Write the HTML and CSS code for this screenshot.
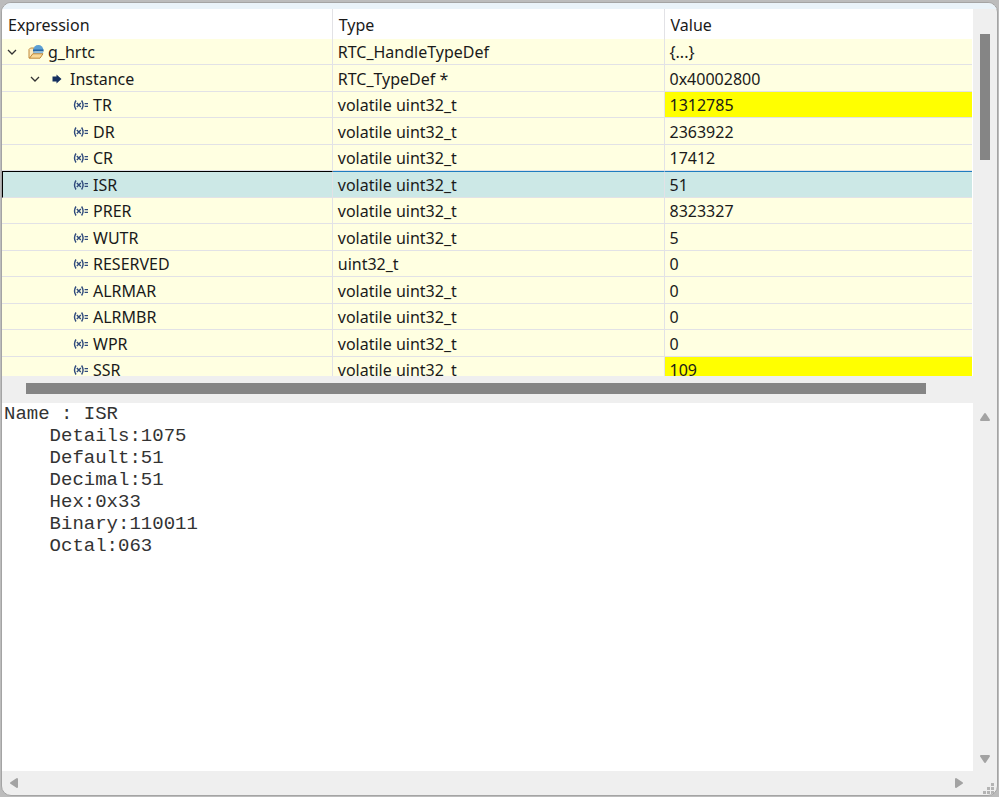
FILE: index.html
```html
<!DOCTYPE html>
<html lang="en">
  <head>
    <meta charset="UTF-8" />
    <meta name="viewport" content="width=device-width, initial-scale=1.0" />
    <title>Expressions</title>
    <link rel="stylesheet" href="styles.css">
  </head>
  <body>
    <!-- Shared icons -->
    <svg class="sprite" aria-hidden="true">
      <symbol id="icon-chevron" viewBox="0 0 10 10">
        <path d="M1 3 L5 7 L9 3" fill="none" stroke="#333" stroke-width="1.3" />
      </symbol>
      <symbol id="icon-variable" viewBox="0 0 16 12">
        <g fill="none" stroke="#2f4a7c" stroke-width="1.4">
          <path d="M3 1.5 Q0 6 3 10.5" />
          <path d="M8.6 1.5 Q11.6 6 8.6 10.5" />
          <path d="M3.8 4 L7.8 8 M7.8 4 L3.8 8" />
          <path d="M11.6 4.6 H15 M11.6 7.4 H15" />
        </g>
      </symbol>
      <symbol id="icon-pointer" viewBox="0 0 10 10">
        <path d="M0.5 2.5 H4.5 V0.5 L9.5 5 L4.5 9.5 V7.5 H0.5 Z" fill="#15305f" />
      </symbol>
      <symbol id="icon-struct" viewBox="0 0 16 16">
        <path d="M1 5.5 L2.5 4 H6 V9 L2 14 H1 Z" fill="#fbe9bd" stroke="#c08a3c" />
        <path d="M5.2 6 A5 5 0 0 1 15.4 6 Z" fill="#5b9fd4" />
        <path d="M5 5.5 H15.6 V7.5 H5 Z" fill="#2564a3" />
        <path d="M5.2 7.5 H15.4 L14.6 10 H5.6 Z" fill="#8fbfe4" />
        <path d="M1.5 14.2 L4.8 9.8 H15 L12 14.2 Z" fill="#f9d998" stroke="#c08a3c" />
      </symbol>
    </svg>

    <main class="window">
      <div class="titlebar"></div>

      <section class="expressions">
        <div class="table-wrap">
          <table>
            <thead>
              <tr>
                <th>Expression</th>
                <th>Type</th>
                <th>Value</th>
              </tr>
            </thead>
            <tbody>
              <tr>
                <td>
                  <div class="cell">
                    <button class="toggle" aria-label="Collapse g_hrtc"><svg><use href="#icon-chevron" /></svg></button>
                    <svg class="struct"><use href="#icon-struct" /></svg>g_hrtc
                  </div>
                </td>
                <td>RTC_HandleTypeDef</td>
                <td>{...}</td>
              </tr>
              <tr>
                <td>
                  <div class="cell level-1">
                    <button class="toggle" aria-label="Collapse Instance"><svg><use href="#icon-chevron" /></svg></button>
                    <svg class="pointer"><use href="#icon-pointer" /></svg>Instance
                  </div>
                </td>
                <td>RTC_TypeDef *</td>
                <td>0x40002800</td>
              </tr>
              <tr>
                <td><div class="cell level-2"><svg class="variable"><use href="#icon-variable" /></svg>TR</div></td>
                <td>volatile uint32_t</td>
                <td class="changed">1312785</td>
              </tr>
              <tr>
                <td><div class="cell level-2"><svg class="variable"><use href="#icon-variable" /></svg>DR</div></td>
                <td>volatile uint32_t</td>
                <td>2363922</td>
              </tr>
              <tr>
                <td><div class="cell level-2"><svg class="variable"><use href="#icon-variable" /></svg>CR</div></td>
                <td>volatile uint32_t</td>
                <td>17412</td>
              </tr>
              <tr class="selected">
                <td><div class="cell level-2"><svg class="variable"><use href="#icon-variable" /></svg>ISR</div></td>
                <td>volatile uint32_t</td>
                <td>51</td>
              </tr>
              <tr>
                <td><div class="cell level-2"><svg class="variable"><use href="#icon-variable" /></svg>PRER</div></td>
                <td>volatile uint32_t</td>
                <td>8323327</td>
              </tr>
              <tr>
                <td><div class="cell level-2"><svg class="variable"><use href="#icon-variable" /></svg>WUTR</div></td>
                <td>volatile uint32_t</td>
                <td>5</td>
              </tr>
              <tr>
                <td><div class="cell level-2"><svg class="variable"><use href="#icon-variable" /></svg>RESERVED</div></td>
                <td>uint32_t</td>
                <td>0</td>
              </tr>
              <tr>
                <td><div class="cell level-2"><svg class="variable"><use href="#icon-variable" /></svg>ALRMAR</div></td>
                <td>volatile uint32_t</td>
                <td>0</td>
              </tr>
              <tr>
                <td><div class="cell level-2"><svg class="variable"><use href="#icon-variable" /></svg>ALRMBR</div></td>
                <td>volatile uint32_t</td>
                <td>0</td>
              </tr>
              <tr>
                <td><div class="cell level-2"><svg class="variable"><use href="#icon-variable" /></svg>WPR</div></td>
                <td>volatile uint32_t</td>
                <td>0</td>
              </tr>
              <tr>
                <td><div class="cell level-2"><svg class="variable"><use href="#icon-variable" /></svg>SSR</div></td>
                <td>volatile uint32_t</td>
                <td class="changed">109</td>
              </tr>
            </tbody>
          </table>
        </div>
        <div class="scroll-y"><div class="thumb"></div></div>
        <div class="scroll-x"><div class="thumb"></div></div>
      </section>

      <section class="details">
        <pre>Name : ISR
    Details:1075
    Default:51
    Decimal:51
    Hex:0x33
    Binary:110011
    Octal:063</pre>
        <div class="arrows-y">
          <button aria-label="Scroll up"><svg viewBox="0 0 12 12"><path d="M6 3 L10 9 H2 Z" /></svg></button>
          <button aria-label="Scroll down"><svg viewBox="0 0 12 12"><path d="M6 9 L10 3 H2 Z" /></svg></button>
        </div>
        <div class="arrows-x">
          <button aria-label="Scroll left"><svg viewBox="0 0 12 12"><path d="M3 6 L9 2 V10 Z" /></svg></button>
          <button aria-label="Scroll right"><svg viewBox="0 0 12 12"><path d="M9 6 L3 2 V10 Z" /></svg></button>
        </div>
        <svg class="grip" viewBox="0 0 12 12">
          <path d="M8 0h3v3h-3z M4 4h3v3h-3z M8 4h3v3h-3z M0 8h3v3h-3z M4 8h3v3h-3z M8 8h3v3h-3z" />
        </svg>
      </section>
    </main>
  </body>
</html>
```

FILE: styles.css
```css
* {
  margin: 0;
  padding: 0;
  box-sizing: border-box;
}

body {
  height: 100vh;
  padding: 2px 1px 1px 1px;
  background-color: #bcbcbc;
  color: #1a1a1a;
  font-family: "Noto Sans", "Open Sans", sans-serif;
  font-size: 16px;
}

.sprite {
  display: none;
}

button {
  border: none;
  background: none;
  cursor: pointer;
}

.window {
  display: flex;
  flex-direction: column;
  height: 100%;
  border: 1px solid #a4a4a4;
  border-radius: 10px;
  background-color: #efefef;
  overflow: hidden;
}

.titlebar {
  height: 6px;
  background-color: #eaf3f9;
}

/* Expression tree */
.expressions {
  display: grid;
  grid-template-columns: 1fr 24px;
  grid-template-rows: 46vh 27px;
}

.table-wrap {
  background-color: #fff;
  padding-right: 1px;
  overflow: hidden;
}

table {
  width: 100%;
  border-collapse: separate;
  border-spacing: 0;
  table-layout: fixed;
}

th,
td {
  height: 26px;
  padding: 1px 5px 0;
  border-right: 1px solid #e2e2e6;
  line-height: 24px;
  text-align: left;
  white-space: nowrap;
}

th {
  height: 30px;
  padding: 2px 6px 0;
  font-weight: normal;
}

th:first-child {
  width: 34.1%;
}

th:nth-child(2) {
  width: 34.2%;
}

th:last-child,
td:last-child {
  border-right: none;
}

td {
  border-bottom: 1px solid #e2e2e6;
  background-color: #ffffe1;
}

tr:nth-child(even) td {
  height: 27px;
}

.cell {
  display: flex;
  align-items: center;
}

.level-1 {
  padding-left: 23px;
}

.level-2 {
  padding-left: 66px;
}

.toggle {
  display: flex;
  margin-right: 11px;
}

.toggle svg {
  width: 10px;
  height: 10px;
}

.struct {
  width: 16px;
  height: 16px;
  margin-right: 4px;
}

.pointer {
  width: 10px;
  height: 10px;
  margin: 0 8px 0 1px;
}

.variable {
  width: 16px;
  height: 12px;
  margin-right: 4px;
}

.changed {
  background-color: #ffff00;
}

.selected td {
  padding-top: 0;
  border-top: 1px solid #1f7cc0;
  background-color: #cce8e6;
}

.selected td:first-child {
  padding-left: 4px;
  border-top-color: #000;
  border-left: 1px solid #000;
}

/* Scroll bars */
.scroll-y {
  padding: 25px 7px 0;
}

.scroll-y .thumb {
  width: 10px;
  height: 126px;
  background-color: #858585;
}

.scroll-x {
  padding: 7px 47px 0 24px;
}

.scroll-x .thumb {
  height: 11px;
  background-color: #858585;
}

/* Details pane */
.details {
  display: grid;
  grid-template-columns: 1fr 24px;
  grid-template-rows: 1fr 24px;
  flex: 1;
}

pre {
  padding-left: 2px;
  background-color: #fff;
  color: #333;
  font-family: "Liberation Mono", "Courier New", monospace;
  font-size: 19px;
  line-height: 22px;
}

.details button {
  display: flex;
}

.details svg {
  width: 12px;
  height: 12px;
  fill: #a3a3a3;
  stroke: #a3a3a3;
  stroke-width: 2;
  stroke-linejoin: round;
}

.arrows-y,
.arrows-x {
  display: flex;
  align-items: center;
  justify-content: space-between;
  padding: 6px;
}

.arrows-y {
  flex-direction: column;
  padding: 8px 0 6px;
}

.arrows-x {
  padding-right: 8px;
}

.details .grip {
  align-self: end;
  justify-self: end;
  margin-right: 2px;
  fill: #b4b4b4;
  stroke: none;
}
```
